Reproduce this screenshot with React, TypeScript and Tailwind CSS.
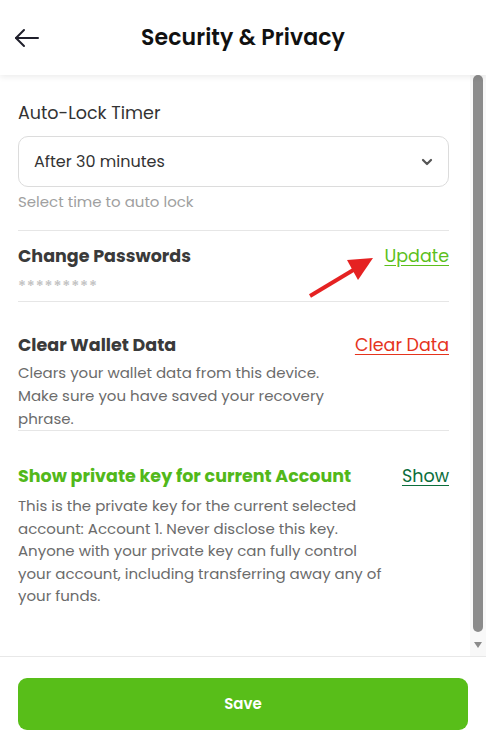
import React, { useState } from 'react';

const options = ['After 5 minutes', 'After 15 minutes', 'After 30 minutes', 'After 1 hour'];

const App: React.FC = () => {
  const [timer] = useState(options[2]);

  return (
    <div className="h-screen w-full flex flex-col bg-white font-['Poppins','Open_Sans',sans-serif] overflow-hidden">
      <header className="relative z-10 h-[75px] shrink-0 bg-white flex items-center shadow-[0_2px_6px_rgba(0,0,0,0.08)]">
        <button className="absolute left-[14px] top-[26px] text-[#1f1f2b]">
          <svg width="26" height="24" viewBox="0 0 26 24" fill="none" stroke="currentColor" strokeWidth="2" strokeLinecap="round" strokeLinejoin="round">
            <path d="M24 12H2" />
            <path d="M10 4L2 12L10 20" />
          </svg>
        </button>
        <h1 className="w-full text-center text-[22px] font-semibold text-[#111] tracking-[0.1px]">Security &amp; Privacy</h1>
      </header>

      <main className="flex-1 min-h-0 flex">
        <div className="flex-1 overflow-hidden pt-[25px] pl-[18px] pr-[21px]">
          <label className="block text-[17.5px] leading-[26px] text-[#333]">Auto-Lock Timer</label>
          <div className="mt-[10px] h-[51px] rounded-[10px] border border-[#dcdcdc] flex items-center justify-between pl-[15px] pr-[14px]">
            <span className="text-[16px] text-[#333]">{timer}</span>
            <svg width="14" height="14" viewBox="0 0 14 14" fill="none" stroke="#555" strokeWidth="2.2" strokeLinecap="round" strokeLinejoin="round">
              <path d="M3 5L7 9L11 5" />
            </svg>
          </div>
          <p className="mt-[5px] text-[15px] leading-[20px] text-[#a0a0a0]">Select time to auto lock</p>

          <div className="mt-[18px] border-t border-[#e6e6e6]" />

          <section className="relative pt-[12px]">
            <div className="flex items-center justify-between">
              <h2 className="text-[17.5px] leading-[26px] font-bold text-[#3a3a3a]">Change Passwords</h2>
              <a className="text-[17.5px] leading-[26px] text-[#5cbf1c] underline underline-offset-[3px]">Update</a>
            </div>
            <p className="mt-[8px] text-[16px] leading-[20px] font-medium text-[#c4c4c4] tracking-[0.8px]">*********</p>
            <svg className="absolute left-[282px] top-[20px]" width="80" height="50" viewBox="0 0 80 50">
              <line x1="10" y1="45" x2="55" y2="18" stroke="#e52222" strokeWidth="4" />
              <polygon points="73,7 47,9 58,29" fill="#e52222" />
            </svg>
          </section>

          <div className="mt-[4px] border-t border-[#e6e6e6]" />

          <section className="pt-[30px]">
            <div className="flex items-center justify-between">
              <h2 className="text-[17.5px] leading-[26px] font-bold text-[#3a3a3a]">Clear Wallet Data</h2>
              <a className="text-[17.5px] leading-[26px] text-[#e5341d] underline underline-offset-[3px]">Clear Data</a>
            </div>
            <p className="mt-[3px] max-w-[330px] text-[15px] leading-[23px] text-[#6b6b6b]">
              Clears your wallet data from this device. Make sure you have saved your recovery phrase.
            </p>
          </section>

          <div className="border-t border-[#e6e6e6]" />

          <section className="pt-[32px]">
            <div className="flex items-center justify-between">
              <h2 className="text-[17.5px] leading-[26px] font-bold text-[#52b81a]">Show private key for current Account</h2>
              <a className="text-[17.5px] leading-[26px] text-[#0b6e3c] underline underline-offset-[3px]">Show</a>
            </div>
            <p className="mt-[6px] max-w-[370px] text-[15px] leading-[22.5px] text-[#6b6b6b]">
              This is the private key for the current selected account: Account 1. Never disclose this key. Anyone with your private key can fully control your account, including transferring away any of your funds.
            </p>
          </section>
        </div>

        <aside className="w-[16px] shrink-0 bg-[#f8f8f8] flex flex-col items-center">
          <div className="w-[10px] h-[557px] rounded-[5px] bg-[#8b8b8b]" />
          <svg className="mt-[10px]" width="8" height="6" viewBox="0 0 8 6">
            <polygon points="0,0 8,0 4,6" fill="#8b8b8b" />
          </svg>
        </aside>
      </main>

      <footer className="shrink-0 border-t border-[#e8e8e8] pt-[21px] pb-[16px] px-[18px]">
        <button className="w-full h-[52px] rounded-[9px] bg-[#58be19] text-white text-[15px] font-semibold">Save</button>
      </footer>
    </div>
  );
};

export default App;
